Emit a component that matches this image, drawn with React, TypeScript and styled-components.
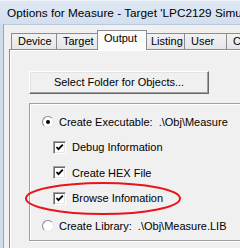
import React from 'react';
import styled, { createGlobalStyle } from 'styled-components';

const GlobalStyle = createGlobalStyle`
    html, body {
        margin: 0;
        padding: 0;
        background: #f0f0f0;
    }
`;

const Window = styled.div`
    position: relative;
    width: 240px;
    height: 248px;
    overflow: hidden;
    display: flex;
    flex-direction: column;
    background: #cfdcee;
    font-family: "Liberation Sans", Arial, sans-serif;
    color: #000;
`;

const TitleBar = styled.div`
    height: 24px;
    flex: none;
    box-sizing: border-box;
    padding: 4px 0 0 7px;
    background: linear-gradient(#dfe8f4, #d2dfef);
    border-top: 1px solid #eef3fa;
    font-size: 11.8px;
    line-height: 16px;
    white-space: nowrap;
    overflow: hidden;
    color: #000;
`;

const FrameRow = styled.div`
    flex: 1;
    display: flex;
    padding-left: 3px;
`;

const Client = styled.div`
    flex: 1;
    display: flex;
    flex-direction: column;
    background: #f0f0f0;
    border-left: 1px solid #8fa4bf;
    border-top: 1px solid #b9c9dd;
    padding: 8px 0 0 5px;
`;

const TabStrip = styled.div`
    display: flex;
    align-items: flex-end;
    height: 17px;
    padding-left: 2px;
    position: relative;
    z-index: 1;
    margin-bottom: -1px;
`;

const Tab = styled.div<{ $w: number; $selected?: boolean }>`
    box-sizing: border-box;
    width: ${props => props.$w}px;
    height: ${props => props.$selected ? 20 : 17}px;
    margin: 0 ${props => props.$selected ? -2 : 0}px;
    padding-left: 6px;
    border: 1px solid #898c95;
    border-bottom: ${props => props.$selected ? 'none' : '1px solid #898c95'};
    border-left-width: ${props => props.$selected ? 1 : 0}px;
    background: ${props => props.$selected
        ? '#fbfbfb'
        : 'linear-gradient(#f2f2f2, #e6e6e6)'};
    font-size: 11px;
    line-height: 15px;
    white-space: nowrap;
    flex: none;
    position: relative;
    z-index: ${props => props.$selected ? 2 : 1};
    &:first-child {
        border-left-width: 1px;
    }
`;

const Panel = styled.div`
    flex: 1;
    background: #f0f0f0;
    border-top: 1px solid #898c95;
    border-left: 1px solid #898c95;
    padding: 21px 0 0 19px;
    box-shadow: inset 1px 1px 0 #fff;
`;

const Button = styled.div`
    box-sizing: border-box;
    width: 180px;
    height: 23px;
    background: #f0f0f0;
    border-top: 1px solid #fff;
    border-left: 1px solid #fff;
    border-right: 1px solid #696969;
    border-bottom: 1px solid #696969;
    box-shadow: inset -1px -1px 0 #a0a0a0, inset 1px 1px 0 #e3e3e3;
    font-size: 11px;
    line-height: 20px;
    text-align: center;
    margin-bottom: 9px;
`;

const GroupBox = styled.div`
    box-sizing: border-box;
    width: 240px;
    height: 138px;
    border: 1px solid #a0a0a0;
    box-shadow: inset 1px 1px 0 #fff, 1px 1px 0 #fff;
    padding: 5px 0 0 12px;
    display: flex;
    flex-direction: column;
`;

const OptionRow = styled.div<{ $indent?: boolean; $h?: number }>`
    display: flex;
    align-items: center;
    height: ${props => props.$h ?? 26}px;
    padding-left: ${props => props.$indent ? 11 : 0}px;
    font-size: 11px;
    white-space: nowrap;
`;

const Radio = styled.span<{ $checked?: boolean }>`
    box-sizing: border-box;
    width: 12px;
    height: 12px;
    border-radius: 50%;
    border: 1px solid;
    border-color: #8a8a8a #e6e6e6 #e6e6e6 #8a8a8a;
    background: #fff;
    margin-right: 5px;
    display: flex;
    align-items: center;
    justify-content: center;
    flex: none;
    &::after {
        content: '';
        width: 4px;
        height: 4px;
        border-radius: 50%;
        background: ${props => props.$checked ? '#000' : 'transparent'};
    }
`;

const Check = styled.span`
    box-sizing: border-box;
    width: 13px;
    height: 13px;
    border-top: 1px solid #a0a0a0;
    border-left: 1px solid #a0a0a0;
    border-right: 1px solid #fff;
    border-bottom: 1px solid #fff;
    box-shadow: inset 1px 1px 0 #696969, inset -1px -1px 0 #e3e3e3;
    background: #fff;
    margin-right: 6px;
    display: flex;
    align-items: center;
    justify-content: center;
    flex: none;
`;

const Ellipse = styled.svg`
    position: absolute;
    left: 24px;
    top: 181px;
    width: 160px;
    height: 36px;
    pointer-events: none;
`;

function CheckMark() {
    return (
        <svg width="9" height="9" viewBox="0 0 9 9">
            <path d="M1.5 4 L3.5 6.2 L7.8 1.6" fill="none" stroke="#000" strokeWidth="1.8" />
        </svg>
    );
}

const tabs = [
    { label: 'Device', w: 46 },
    { label: 'Target', w: 42 },
    { label: 'Output', w: 50, selected: true },
    { label: 'Listing', w: 40 },
    { label: 'User', w: 42 },
    { label: 'C', w: 30 },
];

export default function App() {
    return (
        <>
            <GlobalStyle />
            <Window>
                <TitleBar>Options for Measure - Target 'LPC2129 Simulator'</TitleBar>
                <FrameRow>
                    <Client>
                        <TabStrip>
                            {tabs.map(t => (
                                <Tab key={t.label} $w={t.w} $selected={t.selected}>{t.label}</Tab>
                            ))}
                        </TabStrip>
                        <Panel>
                            <Button>Select Folder for Objects...</Button>
                            <GroupBox>
                                <OptionRow>
                                    <Radio $checked />
                                    Create Executable:&nbsp;&nbsp;.\Obj\Measure
                                </OptionRow>
                                <OptionRow $indent>
                                    <Check><CheckMark /></Check>
                                    Debug Information
                                </OptionRow>
                                <OptionRow $indent>
                                    <Check><CheckMark /></Check>
                                    Create HEX File
                                </OptionRow>
                                <OptionRow $indent $h={27}>
                                    <Check><CheckMark /></Check>
                                    Browse Infomation
                                </OptionRow>
                                <OptionRow $h={29}>
                                    <Radio />
                                    Create Library:&nbsp;&nbsp;.\Obj\Measure.LIB
                                </OptionRow>
                            </GroupBox>
                        </Panel>
                    </Client>
                </FrameRow>
                <Ellipse viewBox="0 0 160 36">
                    <ellipse cx="79" cy="17.5" rx="77" ry="15.5" fill="none" stroke="#e8141c" strokeWidth="2" />
                </Ellipse>
            </Window>
        </>
    );
}
